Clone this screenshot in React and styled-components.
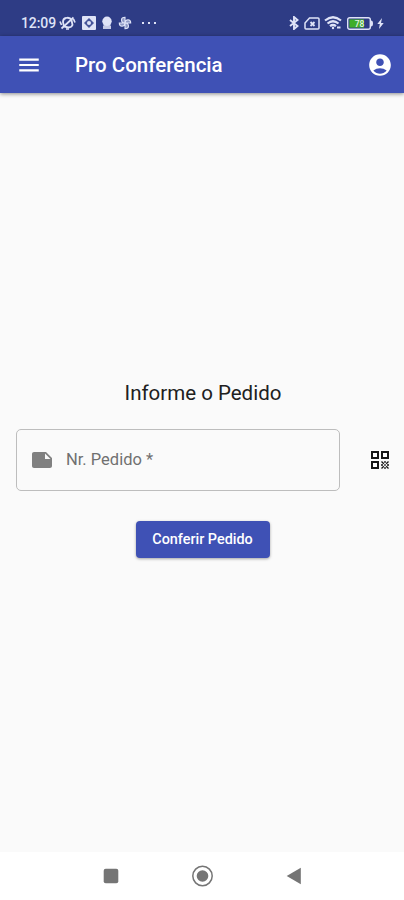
import React from "react";
import styled, { createGlobalStyle } from "styled-components";
import { MdMenu, MdAccountCircle, MdNote } from "react-icons/md";

const GlobalStyle = createGlobalStyle`
  * {
    box-sizing: border-box;
  }

  body {
    margin: 0;
    font-family: Roboto, "Liberation Sans", sans-serif;
  }
`;

const Screen = styled.div`
  display: flex;
  flex-direction: column;
  height: 900px;
  background: #fafafa;
`;

const StatusBar = styled.div`
  display: flex;
  align-items: center;
  justify-content: space-between;
  height: 36px;
  padding: 10px 20px 0 21px;
  background: #2e3c85;
  color: #dfe3f7;
`;

const StatusGroup = styled.div`
  display: flex;
  align-items: center;
  gap: ${(props) => props.$gap || 0}px;
`;

const Clock = styled.span`
  width: 38px;
  font-size: 14px;
  line-height: 16px;
  font-weight: 500;
  letter-spacing: -0.1px;
  white-space: nowrap;
`;

const Toolbar = styled.header`
  display: flex;
  align-items: center;
  height: 57px;
  padding: 0 11px 0 16px;
  background: #3f51b5;
  color: #fff;
  box-shadow: 0 1px 4px rgba(0, 0, 0, 0.45);
  z-index: 1;
`;

const IconButton = styled.button`
  display: flex;
  padding: 0;
  border: 0;
  background: none;
  color: inherit;
`;

const Title = styled.h1`
  flex: 1;
  margin: 1px 0 0 33px;
  font-size: 20.5px;
  line-height: 28px;
  font-weight: 500;
  letter-spacing: 0;
`;

const Content = styled.main`
  flex: 1;
  display: flex;
  flex-direction: column;
  align-items: center;
  justify-content: center;
  padding: 0 14px 8px 16px;
`;

const Heading = styled.h2`
  margin: 0;
  font-size: 20.5px;
  line-height: 28px;
  font-weight: 400;
  letter-spacing: 0;
  color: #202020;
`;

const FieldRow = styled.div`
  display: flex;
  align-items: center;
  justify-content: space-between;
  width: 100%;
  margin: 22px 0 30px;
  color: #151515;
`;

const Field = styled.label`
  display: flex;
  align-items: center;
  gap: 12px;
  width: 324px;
  height: 62px;
  padding: 0 13px;
  border: 1px solid #bdbdbd;
  border-radius: 5px;
  color: #808080;
`;

const FieldLabel = styled.span`
  font-size: 16.5px;
  line-height: 20px;
  color: #707070;
`;

const SubmitButton = styled.button`
  width: 134px;
  height: 37px;
  padding: 0 1px 0 0;
  border: 0;
  border-radius: 4px;
  background: #3f51b5;
  color: #fff;
  font-family: inherit;
  font-size: 14.4px;
  font-weight: 500;
  box-shadow: 0 1px 3px rgba(0, 0, 0, 0.35);
`;

const NavigationBar = styled.nav`
  display: flex;
  align-items: center;
  justify-content: space-between;
  height: 48px;
  padding: 0 102px 0 103px;
  background: #fff;
`;

const MutedIcon = () => (
  <svg width="17" height="14" viewBox="0 0 17 14" fill="none" stroke="currentColor">
    <path d="M5 10.5 4 6Q4 2.5 7 2q4-1 5.5 2l1 5q-1 2.5-4 2.5Z" strokeWidth="1.8" />
    <path d="M1 5.5 2.5 9M14.5 3 16 6.5M7 13h3" strokeWidth="1.7" />
    <path d="M2.5 12.5 14.5 1.5" strokeWidth="1.7" />
  </svg>
);

const AppIcon = () => (
  <svg width="14" height="14" viewBox="0 0 14 14">
    <rect width="14" height="14" rx="1" fill="currentColor" />
    <path d="m7 2 5 5-5 5-5-5Z" fill="#46549a" />
    <circle cx="7" cy="7" r="2" fill="#dfe3f7" />
  </svg>
);

const LampIcon = () => (
  <svg width="10" height="14" viewBox="0 0 10 14" fill="currentColor">
    <circle cx="5" cy="5.2" r="4.7" />
    <path d="M1.5 7.5h7V10H9v3H1v-3h.5Z" opacity=".85" />
  </svg>
);

const PinwheelIcon = () => (
  <svg width="14" height="14" viewBox="0 0 14 14" fill="currentColor" fillOpacity=".55" stroke="currentColor" strokeWidth="1.1">
    <path d="M7 7V1.3Q3.5 1.3 3.5 4T7 7ZM7 7h5.7Q12.7 3.8 10 3.8T7 7ZM7 7v5.7q3.5 0 3.5-2.7T7 7ZM7 7H1.3q0 3.2 2.7 3.2T7 7Z" />
  </svg>
);

const Dots = styled.span`
  display: flex;
  gap: 4px;
  margin-left: 10px;
`;

const Dot = styled.i`
  width: 2px;
  height: 2px;
  background: currentColor;
`;

const BluetoothIcon = () => (
  <svg width="10" height="14" viewBox="0 0 10 14" fill="none" stroke="currentColor" strokeWidth="1.9">
    <path d="m1 4 7.5 6L5 13V1l3.5 3L1 10" />
  </svg>
);

const SimIcon = () => (
  <svg width="16" height="13" viewBox="0 0 16 13" fill="none" stroke="currentColor" strokeWidth="1.5">
    <path d="M5.5 1H14q1 0 1 1v9q0 1-1 1H2q-1 0-1-1V6Z" />
    <path d="m6.5 5 4 4M10.5 5l-4 4" strokeWidth="1.8" />
  </svg>
);

const WifiIcon = () => (
  <svg width="18" height="14" viewBox="0 0 18 14" fill="none" stroke="currentColor" strokeWidth="2.2">
    <path d="M1 4.5Q9-2 17 4.5M3.5 7.5q5.5-4.5 11 0M6 10.2q3-2.4 6 0" />
    <circle cx="9" cy="12" r="1.2" fill="currentColor" stroke="none" />
    <path d="M13 11.5h3.5" strokeWidth="2" />
  </svg>
);

const BatteryIcon = () => (
  <svg width="26" height="13" viewBox="0 0 26 13">
    <rect x=".7" y=".7" width="22.6" height="11.6" rx="2" fill="none" stroke="currentColor" strokeWidth="1.4" />
    <rect x="2.4" y="2.4" width="14.6" height="8.2" fill="#3fae2a" />
    <path d="M24 3.5q2 0 2 3t-2 3Z" fill="currentColor" />
    <text x="12.5" y="9.6" textAnchor="middle" fontSize="8.5" fontWeight="500" fill="#e9f3e8">
      78
    </text>
  </svg>
);

const BoltIcon = () => (
  <svg width="7" height="11" viewBox="0 0 7 11" fill="currentColor">
    <path d="M5 0 .3 6h2.5L2 11l4.7-6H4Z" />
  </svg>
);

const ScanIcon = () => (
  <svg width="20" height="20" viewBox="0 0 20 20" fill="none" stroke="currentColor">
    <path d="M2 2h6v6H2ZM12 2h6v6h-6ZM2 12h6v6H2Z" strokeWidth="2" />
    <path
      d="M11.5 11.5l2.3 2.3M18.5 11.5l-2.3 2.3M13.8 16.2l-2.3 2.3M16.2 16.2l2.3 2.3M15 11v2M15 17v2M11 15h2M17 15h2M14.2 15h1.6"
      strokeWidth="1.3"
    />
  </svg>
);

const RecentsIcon = () => (
  <svg width="16" height="16" viewBox="0 0 16 16">
    <rect x=".7" y=".7" width="14.6" height="14.6" rx="2" fill="#757575" />
  </svg>
);

const HomeIcon = () => (
  <svg width="22" height="22" viewBox="0 0 22 22">
    <circle cx="10.5" cy="11" r="9.7" fill="none" stroke="#757575" strokeWidth="1.5" />
    <circle cx="10.5" cy="11" r="5.8" fill="#757575" />
  </svg>
);

const BackIcon = () => (
  <svg width="16" height="18" viewBox="0 0 16 18">
    <path d="M14.8.7v16.6L.7 9Z" fill="#757575" />
  </svg>
);

export default () => {
  return (
    <>
      <GlobalStyle />
      <Screen>
        <StatusBar>
          <StatusGroup>
            <Clock>12:09</Clock>
            <StatusGroup $gap={6}>
              <MutedIcon />
              <AppIcon />
              <LampIcon />
              <PinwheelIcon />
            </StatusGroup>
            <Dots>
              <Dot />
              <Dot />
              <Dot />
            </Dots>
          </StatusGroup>
          <StatusGroup $gap={4.5}>
            <BluetoothIcon />
            <SimIcon />
            <WifiIcon />
            <BatteryIcon />
            <BoltIcon />
          </StatusGroup>
        </StatusBar>

        <Toolbar>
          <IconButton aria-label="Menu">
            <MdMenu size={26} />
          </IconButton>
          <Title>Pro Conferência</Title>
          <IconButton aria-label="Conta">
            <MdAccountCircle size={26} />
          </IconButton>
        </Toolbar>

        <Content>
          <Heading>Informe o Pedido</Heading>
          <FieldRow>
            <Field>
              <MdNote size={24} />
              <FieldLabel>Nr. Pedido *</FieldLabel>
            </Field>
            <IconButton aria-label="Ler QR code">
              <ScanIcon />
            </IconButton>
          </FieldRow>
          <SubmitButton>Conferir Pedido</SubmitButton>
        </Content>

        <NavigationBar>
          <RecentsIcon />
          <HomeIcon />
          <BackIcon />
        </NavigationBar>
      </Screen>
    </>
  );
};
